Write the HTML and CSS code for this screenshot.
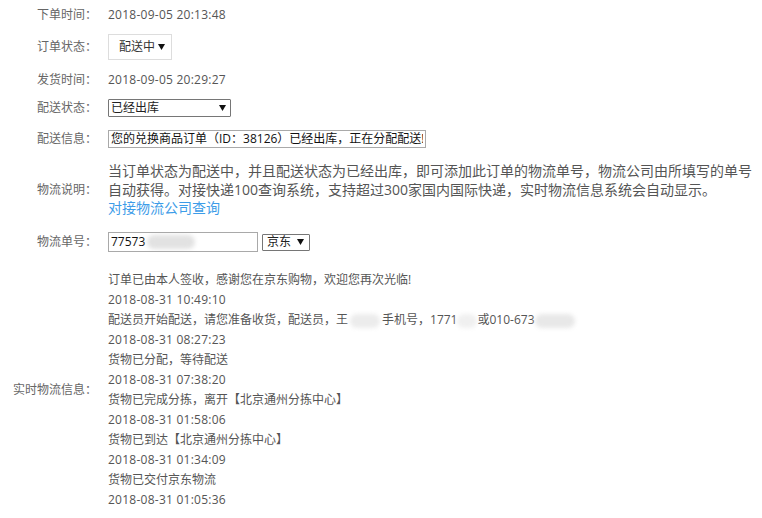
FILE: index.html
```html
<!DOCTYPE html>
<html lang="zh-CN">
<head>
<meta charset="utf-8">
<title>订单详情</title>
<link rel="stylesheet" href="styles.css">
</head>
<body>
<div class="form">
  <div class="row r1">
    <div class="label">下单时间：</div>
    <div class="value t">2018-09-05 20:13:48</div>
  </div>
  <div class="row r2">
    <div class="label">订单状态：</div>
    <div class="value">
      <div class="sel-soft"><span>配送中</span><svg class="arr" width="7" height="6" viewBox="0 0 7 6"><path d="M0 0H7L3.5 6Z" fill="#111"/></svg></div>
    </div>
  </div>
  <div class="row r3">
    <div class="label">发货时间：</div>
    <div class="value t">2018-09-05 20:29:27</div>
  </div>
  <div class="row r4">
    <div class="label">配送状态：</div>
    <div class="value">
      <div class="sel-native sel-wide"><span>已经出库</span><svg class="arr" width="7" height="6" viewBox="0 0 7 6"><path d="M0 0H7L3.5 6Z" fill="#111"/></svg></div>
    </div>
  </div>
  <div class="row r5">
    <div class="label">配送信息：</div>
    <div class="value">
      <div class="input input-long"><span class="clip">您的兑换商品订单（ID：38126）已经出库，正在分配配送!</span></div>
    </div>
  </div>
  <div class="row r6">
    <div class="label">物流说明：</div>
    <div class="value desc">
      <p>当订单状态为配送中，并且配送状态为已经出库，即可添加此订单的物流单号，物流公司由所填写的单号自动获得。对接快递100查询系统，支持超过300家国内国际快递，实时物流信息系统会自动显示。</p>
      <a class="link" href="#">对接物流公司查询</a>
    </div>
  </div>
  <div class="row r7">
    <div class="label">物流单号：</div>
    <div class="value inline">
      <div class="input input-short"><span>77573</span><span class="blur bl0"></span></div>
      <div class="sel-native sel-small"><span>京东</span><svg class="arr" width="7" height="6" viewBox="0 0 7 6"><path d="M0 0H7L3.5 6Z" fill="#111"/></svg></div>
    </div>
  </div>
  <div class="row r8">
    <div class="label">实时物流信息：</div>
    <div class="value track">
      <div>订单已由本人签收，感谢您在京东购物，欢迎您再次光临!</div>
      <div class="t">2018-08-31 10:49:10</div>
      <div>配送员开始配送，请您准备收货，配送员，王<span class="blur bl1"></span>手机号，1771<span class="blur bl2"></span>或010-673<span class="blur bl3"></span></div>
      <div class="t">2018-08-31 08:27:23</div>
      <div>货物已分配，等待配送</div>
      <div class="t">2018-08-31 07:38:20</div>
      <div>货物已完成分拣，离开【北京通州分拣中心】</div>
      <div class="t">2018-08-31 01:58:06</div>
      <div>货物已到达【北京通州分拣中心】</div>
      <div class="t">2018-08-31 01:34:09</div>
      <div>货物已交付京东物流</div>
      <div class="t">2018-08-31 01:05:36</div>
    </div>
  </div>
</div>
</body>
</html>
```
FILE: styles.css
```css
* { box-sizing: border-box; }
html, body { margin: 0; padding: 0; background: #fff; }
body {
  font-family: "Open Sans", "Noto Sans CJK SC", sans-serif;
  font-size: 12px;
  color: #666;
}
.form { display: flex; flex-direction: column; }
.row { display: flex; align-items: center; }
.label {
  width: 97px;
  flex: none;
  text-align: right;
  color: #666;
  line-height: 16px;
}
.value {
  margin-left: 11px;
  color: #555;
  line-height: 16px;
}
.t { letter-spacing: 0.25px; }
.r1 { height: 30px; }
.r2 { height: 34px; }
.r3 { height: 32px; }
.r4 { height: 24px; }
.r5 { height: 38px; }
.r6 { height: 64px; }
.r7 { height: 40px; }
.r8 { padding-top: 8px; }

.arr { display: block; flex: none; }

.sel-soft {
  width: 64px;
  height: 26px;
  border: 1px solid #ddd;
  display: flex;
  align-items: center;
  justify-content: space-between;
  padding: 0 6px 0 10px;
  color: #333;
}
.sel-native {
  height: 18px;
  border: 1px solid #767676;
  border-radius: 1px;
  display: flex;
  align-items: center;
  justify-content: space-between;
  color: #222;
  background: #fff;
}
.sel-wide { width: 123px; padding: 0 4px 0 2px; }
.sel-small { width: 48px; height: 17px; padding: 0 5px 0 4px; }

.input {
  border: 1px solid #a9a9a9;
  color: #111;
  display: flex;
  align-items: center;
  overflow: hidden;
  white-space: nowrap;
  padding: 0 2px;
}
.input-long { width: 318px; height: 18px; }
.input-short { width: 150px; height: 20px; }
.clip { display: block; overflow: hidden; }

.inline { display: flex; align-items: center; gap: 4px; }

.desc { font-size: 14px; line-height: 18.5px; width: 650px; }
.desc p { margin: 0; }
.link { color: #3d9ce8; text-decoration: none; }

.track { line-height: 20px; }
.track div { white-space: nowrap; }

.blur {
  display: inline-block;
  vertical-align: middle;
  height: 14px;
  background: #e4e4e4;
  border-radius: 7px;
  filter: blur(2px);
}
.bl0 { width: 48px; margin-left: 2px; background: #e2e2e2; }
.bl1 { width: 30px; margin: 0 2px; background: #ececec; }
.bl2 { width: 20px; margin: 0 0 0 0; background: #f0f0f0; }
.bl3 { width: 40px; background: #e8e8e8; }
```
